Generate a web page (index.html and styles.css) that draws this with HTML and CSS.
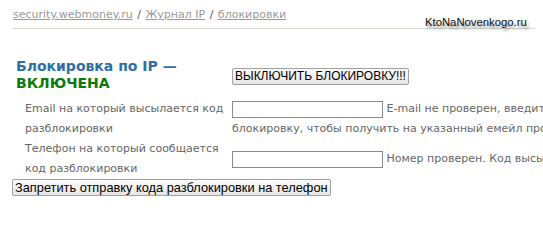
FILE: index.html
```html
<!DOCTYPE html>
<html lang="ru">
<head>
<meta charset="utf-8">
<link rel="stylesheet" href="styles.css">
</head>
<body>
<div class="page">
  <div class="crumbs">
    <a href="#">security.webmoney.ru</a> <span class="sep">/</span> <a href="#">Журнал IP</a> <span class="sep">/</span> <a href="#">блокировки</a>
  </div>
  <div class="rule"></div>
  <div class="watermark">KtoNaNovenkogo.ru</div>

  <div class="status">
    <h2 class="title"><span class="blue">Блокировка по IP —</span><br><span class="green">ВКЛЮЧЕНА</span></h2>
    <div class="status-btn"><button class="btn">ВЫКЛЮЧИТЬ БЛОКИРОВКУ!!!</button></div>
  </div>

  <div class="form">
    <div class="label">Email на который высылается код разблокировки</div>
    <div class="field"><input class="inp" type="text"> <span class="nw">E-mail не проверен, введите адрес и подтвердите его или снимите</span><br><span class="nw">блокировку, чтобы получить на указанный емейл проверочный код</span></div>
    <div class="label">Телефон на который сообщается код разблокировки</div>
    <div class="field"><input class="inp" type="text"> <span class="nw">Номер проверен. Код высылается на этот номер телефона</span></div>
  </div>
  <button class="btn btn2">Запретить отправку кода разблокировки на телефон</button>
</div>
</body>
</html>
```
FILE: styles.css
```css
html, body {
  margin: 0;
  padding: 0;
  background: #fff;
  overflow: hidden;
}
.page {
  position: relative;
  width: 543px;
  height: 230px;
  padding: 0 8px 0 13px;
  box-sizing: border-box;
  font-family: "DejaVu Sans", Verdana, sans-serif;
  font-size: 11px;
  color: #666;
  overflow: hidden;
}
.crumbs {
  padding-top: 8px;
  line-height: 13px;
  color: #444;
  white-space: nowrap;
}
.crumbs a {
  color: #999;
  text-decoration: underline;
}
.crumbs .sep { color: #555; margin: 0 1px; }
.rule {
  margin-top: 7px;
  height: 1px;
  background: #dcdcd4;
}
.watermark {
  position: absolute;
  left: 425px;
  top: 16px;
  font-family: "Liberation Sans", Arial, sans-serif;
  font-size: 11.3px;
  color: #111;
  text-shadow: 2px 3px 3px rgba(0,0,0,0.45);
}
.status {
  display: grid;
  grid-template-columns: 216px auto;
  align-items: center;
  margin-top: 29px;
  margin-left: 3px;
}
.title {
  margin: 0;
  font-size: 14px;
  font-weight: bold;
  line-height: 17px;
}
.blue { color: #2f6fa6; }
.green { color: #0a7a0a; }
.btn {
  font-family: "Liberation Sans", Arial, sans-serif;
  font-size: 12px;
  color: #000;
  height: 17px;
  padding: 0 2px;
  border: 1px solid #a0a0a0;
  border-radius: 2px;
  background: linear-gradient(#fbfbfb, #e6e6e6);
  line-height: 15px;
  white-space: nowrap;
}
.status-btn .btn { margin-top: 3px; }
.form {
  display: grid;
  grid-template-columns: 216px 700px;
  margin-top: 7px;
  margin-left: 3px;
  width: 916px;
  line-height: 20px;
}
.label {
  padding-left: 9px;
  align-self: center;
}
.field {
  align-self: center;
  white-space: nowrap;
}
.nw { white-space: nowrap; }
.inp {
  width: 151px;
  height: 17px;
  box-sizing: border-box;
  border: 1px solid #8a8a8a;
  padding: 0;
  margin: 0;
  vertical-align: middle;
  background: #fff;
}
.btn2 {
  display: block;
  margin-top: 0;
  margin-left: -1px;
  font-size: 12.8px;
}
```
